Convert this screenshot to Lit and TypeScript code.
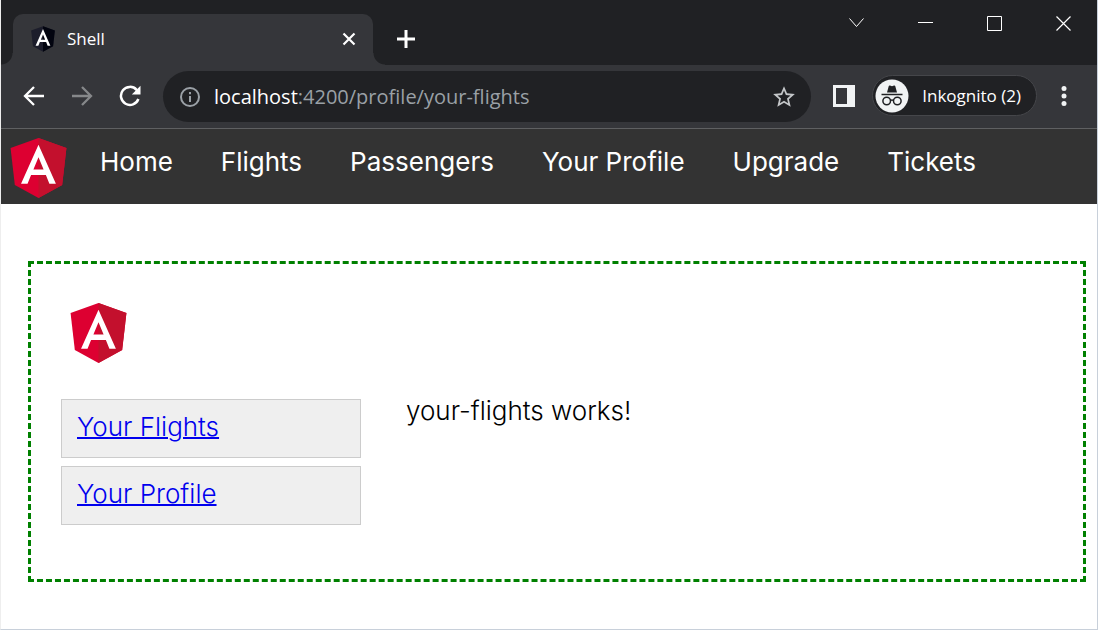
import { LitElement, html, css, svg } from "lit";
import { customElement, property } from "lit/decorators.js";

const shield = (left: string, right: string) => svg`
  <path fill=${left} d="M125 30 31.9 63.2l14.2 123.1L125 230l78.9-43.7 14.2-123.1z"/>
  <path fill=${right} d="M125 30v200l78.9-43.7 14.2-123.1z"/>
  <path fill="#fff" d="M125 52.1 66.8 182.6h21.7l11.7-29.2h49.4l11.7 29.2H183zm17 83.3h-34l17-40.9z"/>`;

@customElement("angular-logo")
export class AngularLogo extends LitElement {
  static styles = css`
    :host { display: block; flex: none; width: 75px; height: 75px; }
    svg { display: block; width: 100%; height: 100%; }
  `;
  render() {
    return html`<svg viewBox="0 0 250 250" role="img" aria-label="Angular">${shield("#dd0031", "#c3102d")}</svg>`;
  }
}

@customElement("browser-chrome")
export class BrowserChrome extends LitElement {
  @property() title = "";
  @property() host = "";
  @property() path = "";

  static styles = css`
    :host { display: block; color: #fff; font-family: "Open Sans", "Noto Sans", sans-serif; background: #202124; }
    button { appearance: none; border: 0; margin: 0; padding: 0; background: none; color: inherit; font: inherit; display: grid; place-items: center; }
    svg { display: block; fill: none; stroke: currentColor; }
    .solid { stroke: none; }
    .strip { display: flex; height: 65px; align-items: flex-end; }
    .foot { flex: none; width: 12px; height: 12px; background: radial-gradient(circle at 0 0, transparent 11px, #35363a 12px); }
    .foot.end { background: radial-gradient(circle at 100% 0, transparent 11px, #35363a 12px); }
    .tab { display: flex; align-items: center; box-sizing: border-box; flex: 0 1 360px; height: 51px; padding: 0 14px 2px 16px; gap: 10px; background: #35363a; border-radius: 10px 10px 0 0; font-size: 17px; }
    .name { flex: 1; }
    .new { width: 42px; height: 51px; padding-bottom: 2px; }
    .window { display: flex; margin-left: auto; align-self: flex-start; }
    .window button { width: 69px; height: 46px; }
    .bar { display: flex; align-items: center; height: 63px; box-sizing: border-box; padding: 0 21px 0 9px; background: #35363a; }
    .tool { flex: none; width: 48px; height: 48px; padding-bottom: 2px; }
    .dim { color: #86888a; }
    .address { display: flex; align-items: center; flex: 1; min-width: 0; height: 51px; margin: 0 9px; box-sizing: border-box; padding: 0 14px 0 16px; gap: 13px; border-radius: 26px; background: #202124; font-size: 20px; }
    .url { flex: 1; color: #9aa0a6; white-space: nowrap; overflow: hidden; }
    .url b { font-weight: 400; color: #fff; }
    .profile { display: flex; align-items: center; box-sizing: border-box; height: 41px; margin: 0 0 2px 4px; padding: 0 15px 0 2px; gap: 13px; border: 1px solid #45464a; border-radius: 21px; background: #202124; font-size: 17px; white-space: nowrap; }
    .more { width: 24px; height: 48px; margin-left: 15px; padding-bottom: 2px; }
    .rule { height: 1px; background: #5f6062; }
  `;

  render() {
    return html`
      <div class="strip">
        <span class="foot"></span>
        <div class="tab">
          <svg class="solid" width="28" height="28" viewBox="15 20 220 220">${shield("#1c1d2b", "#02040f")}</svg>
          <span class="name">${this.title}</span>
          <button aria-label="Close tab"><svg width="20" height="20" viewBox="0 0 20 20" stroke-width="2.2"><path d="m4.500 4.500 11 11m0-11-11 11"/></svg></button>
        </div>
        <span class="foot end"></span>
        <button class="new" aria-label="New tab"><svg width="20" height="20" viewBox="0 0 20 20" stroke-width="3"><path d="M10 1v18M1 10h18"/></svg></button>
        <div class="window">
          <button aria-label="Search tabs"><svg width="16" height="16" viewBox="0 0 16 16"><path d="m1.500 3.500 7 8 7-8"/></svg></button>
          <button aria-label="Minimize"><svg width="16" height="16" viewBox="0 0 16 16"><path d="M1 7.500h15"/></svg></button>
          <button aria-label="Maximize"><svg width="16" height="16" viewBox="0 0 16 16"><path d="M1.500 1.500h14v14h-14z"/></svg></button>
          <button aria-label="Close"><svg width="16" height="16" viewBox="0 0 16 16" stroke-width="1.200"><path d="m1.500 1.500 14 14m0-14-14 14"/></svg></button>
        </div>
      </div>
      <div class="bar">
        <button class="tool" aria-label="Back"><svg width="22" height="22" viewBox="0 0 22 22" stroke-width="2.300"><path d="M21 11H2.500M11 2l-9 9 9 9"/></svg></button>
        <button class="tool dim" aria-label="Forward"><svg width="22" height="22" viewBox="0 0 22 22" stroke-width="2.300"><path d="M1 11h18.500M11 2l9 9-9 9"/></svg></button>
        <button class="tool" aria-label="Reload"><svg width="22" height="22" viewBox="0 0 22 22" stroke-width="2.500"><path d="M19.400 14A9 9 0 1 1 17.600 4.800L19 6.500"/><path d="M21.500.8v8.700h-8.700z" fill="currentColor" stroke="none"/></svg></button>
        <div class="address">
          <svg width="22" height="22" viewBox="0 0 22 22" stroke-width="2" color="#9aa0a6"><circle cx="11" cy="11" r="9"/><path d="M11 10v6M11 6v2.200"/></svg>
          <span class="url"><b>${this.host}</b>${this.path}</span>
          <button aria-label="Bookmark this page"><svg class="solid" width="26" height="26" viewBox="0 0 24 24"><path fill="#c4c7c9" d="m22 9.240-7.190-.62L12 2 9.190 8.630 2 9.240l5.460 4.730L5.820 21 12 17.270 18.180 21l-1.630-7.030zM12 15.400l-3.760 2.270 1-4.280-3.320-2.880 4.380-.38L12 6.100l1.710 4.040 4.380.38-3.320 2.880 1 4.280z"/></svg></button>
        </div>
        <button class="tool" aria-label="Side panel"><svg class="solid" width="22" height="22" viewBox="0 0 22 22"><path fill="#f1f3f4" fill-rule="evenodd" d="M0 0h22v22H0zm3 3v16h11V3z"/></svg></button>
        <button class="profile">
          <svg width="34" height="34" viewBox="0 0 34 34"><circle cx="17" cy="17" r="16.500" fill="#f1f3f4" stroke="none"/><g stroke="#202124" stroke-width="1.500"><path fill="#202124" stroke="none" d="m12 13.500 1.700-6.200q.3-1 1.300-.7l2 .6 2-.6q1-.3 1.300.7l1.700 6.200z"/><path d="M6.500 15.500h21"/><circle cx="11.700" cy="22" r="3.800"/><circle cx="22.300" cy="22" r="3.800"/><path d="M15.500 21.500q1.500-1 3 0"/></g></svg>
          Inkognito (2)
        </button>
        <button class="more" aria-label="Menu"><svg class="solid" width="6" height="20" viewBox="0 0 6 20"><g fill="#f1f3f4"><circle cx="3" cy="2.500" r="2.500"/><circle cx="3" cy="10" r="2.500"/><circle cx="3" cy="17.500" r="2.500"/></g></svg></button>
      </div>
      <div class="rule"></div>
    `;
  }
}

@customElement("app-root")
export class AppRoot extends LitElement {
  static styles = css`
    :host { display: block; box-sizing: border-box; min-height: 100vh; border: solid #c8d0da; border-width: 0 1px 1px; border-left-color: #eee; background: #fff; color: #000; font-family: Inter, "Open Sans", sans-serif; font-size: 26px; line-height: 30px; }
    .nav { display: flex; background: #333; padding-right: 24px; }
    .menu { display: flex; flex-wrap: wrap; gap: 0 48px; margin: 0; padding: 18px 0 0 24px; list-style: none; }
    .menu a { color: #fff; text-decoration: none; }
    .card { margin: 57px 11px 0 27px; padding: 30px 30px 54px; border: 3px dashed green; }
    .columns { display: flex; gap: 45px; margin-top: 30px; }
    .side { display: flex; flex-direction: column; gap: 8px; flex: 0 1 300px; }
    .item { box-sizing: border-box; height: 59px; padding: 12px 15px; border: 1px solid #ccc; background: #efefef; font-weight: 300; }
    .item a { color: #00e; text-decoration-thickness: 2px; }
    .text { margin: -3px 0 0; font-weight: 300; }
  `;

  private links = ["Home", "Flights", "Passengers", "Your Profile", "Upgrade", "Tickets"];
  private sections = ["Your Flights", "Your Profile"];

  render() {
    return html`
      <browser-chrome title="Shell" host="localhost" path=":4200/profile/your-flights"></browser-chrome>
      <nav class="nav">
        <angular-logo></angular-logo>
        <ul class="menu">${this.links.map((l) => html`<li><a href="#">${l}</a></li>`)}</ul>
      </nav>
      <main class="card">
        <angular-logo></angular-logo>
        <div class="columns">
          <div class="side">${this.sections.map((s) => html`<div class="item"><a href="#">${s}</a></div>`)}</div>
          <p class="text">your-flights works!</p>
        </div>
      </main>
    `;
  }
}
